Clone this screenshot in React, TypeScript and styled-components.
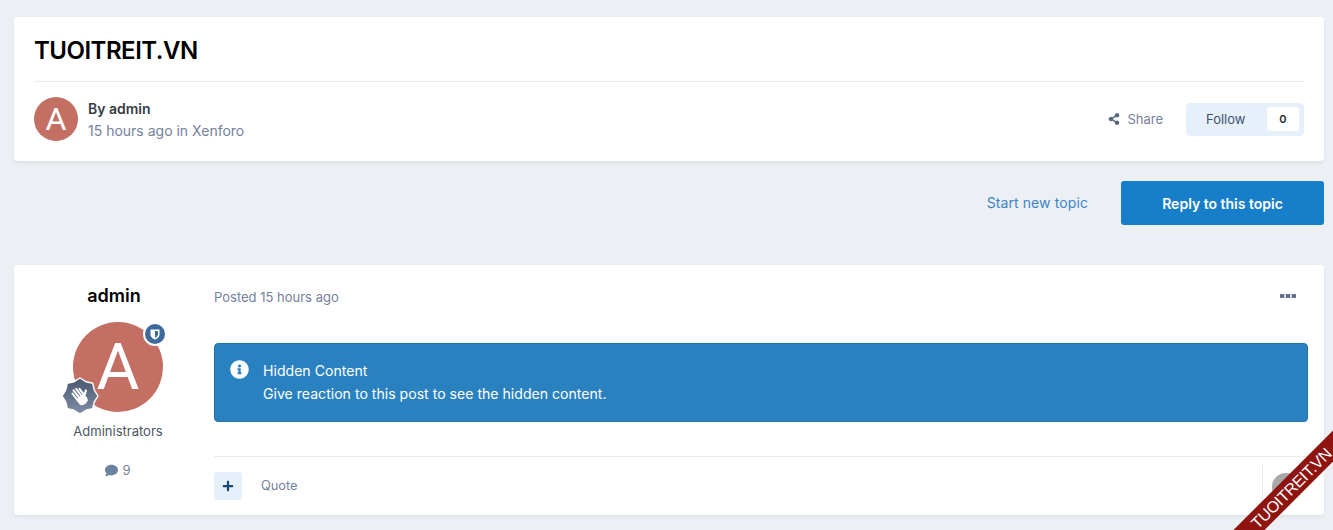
import { createGlobalStyle } from "styled-components";
import styled from "styled-components";
import { FaInfoCircle, FaComment, FaShareAlt, FaPlus } from "react-icons/fa";

const GlobalStyle = createGlobalStyle`
  html, body {
    margin: 0;
    height: 530px;
    overflow: hidden;
    background: #ecf0f5;
    font-family: Inter, "Liberation Sans", sans-serif;
  }
`;

const Page = styled.div`
  position: relative;
  width: 1333px;
  height: 530px;
  overflow: hidden;
  box-sizing: border-box;
  padding: 17px 9px 0 14px;
`;

const Card = styled.section`
  background: #fff;
  border-radius: 4px;
  box-shadow: 0 2px 4px -1px rgba(0, 0, 0, 0.1);
`;

const Header = styled(Card)`
  height: 144px;
  box-sizing: border-box;
  padding: 0 20px;
`;

const Title = styled.h1`
  margin: 0;
  height: 64px;
  line-height: 68px;
  font-size: 24px;
  font-weight: 600;
  letter-spacing: -0.5px;
  color: #000;
  border-bottom: 1px solid #e9ebee;
`;

const MetaRow = styled.div`
  display: flex;
  align-items: center;
  height: 74px;
`;

const Avatar = styled.div<{ $size: number }>`
  position: relative;
  flex: none;
  width: ${(p) => p.$size}px;
  height: ${(p) => p.$size}px;
  border-radius: 50%;
  background: #c46f63;
  color: #fff;
  display: flex;
  align-items: center;
  justify-content: center;
  font-family: Roboto, sans-serif;
  font-size: ${(p) => p.$size * 0.73}px;
  line-height: 1;
`;

const MetaText = styled.div`
  margin-left: 10px;
  padding-top: 2px;
  font-size: 14px;
  line-height: 22px;
  color: #76819c;
`;

const MetaAuthor = styled.div`
  font-weight: 600;
  font-size: 14px;
  color: #353c41;
`;

const MetaActions = styled.div`
  margin-left: auto;
  display: flex;
  align-items: center;
`;

const ShareLink = styled.a`
  display: flex;
  align-items: center;
  gap: 7px;
  margin-right: 23px;
  font-size: 13px;
  color: #76819c;
  svg {
    width: 12px;
    height: 12px;
    color: #5b6780;
  }
`;

const FollowButton = styled.div`
  width: 118px;
  height: 33px;
  box-sizing: border-box;
  padding: 4px 5px 4px 20px;
  display: flex;
  align-items: center;
  justify-content: space-between;
  background: #e6f0fa;
  border-radius: 4px;
  font-size: 13px;
  color: #3d5170;
`;

const FollowCount = styled.span`
  width: 32px;
  height: 24px;
  display: flex;
  align-items: center;
  justify-content: center;
  background: #fff;
  border-radius: 3px;
  font-size: 11px;
  font-weight: 600;
  color: #262e3a;
`;

const TopicActions = styled.div`
  display: flex;
  justify-content: flex-end;
  height: 44px;
  margin: 20px 0 40px;
`;

const StartLink = styled.a`
  margin-right: 33px;
  font-size: 14px;
  letter-spacing: 0.1px;
  line-height: 43px;
  color: #3d85c6;
`;

const ReplyButton = styled.a`
  width: 203px;
  height: 44px;
  display: flex;
  align-items: center;
  justify-content: center;
  background: #177ec9;
  border-radius: 3px;
  color: #fff;
  font-size: 14px;
  font-weight: 600;
`;

const Post = styled(Card)`
  height: 250px;
  display: flex;
`;

const Author = styled.aside`
  flex: none;
  width: 200px;
  box-sizing: border-box;
  padding: 20px 0 0 8px;
  display: flex;
  flex-direction: column;
  align-items: center;
`;

const AuthorName = styled.div`
  margin: 0 0 15px -8px;
  font-size: 18px;
  font-weight: 600;
  line-height: 22px;
  color: #000;
`;

const ModBadge = styled.span`
  position: absolute;
  top: 0;
  right: -4px;
  width: 24px;
  height: 24px;
  box-sizing: border-box;
  border: 2px solid #fff;
  border-radius: 50%;
  background: #3c6a9c;
  display: flex;
  align-items: center;
  justify-content: center;
  svg {
    width: 10px;
    height: 11px;
  }
`;

const RankBadge = styled.svg`
  position: absolute;
  left: -12px;
  bottom: -3px;
  width: 38px;
  height: 38px;
`;

const Group = styled.div`
  margin-top: 10px;
  font-size: 13px;
  line-height: 18px;
  color: #4b5563;
`;

const PostCount = styled.div`
  margin-top: 21px;
  display: flex;
  align-items: center;
  gap: 4px;
  font-size: 13px;
  line-height: 18px;
  color: #76819c;
  svg {
    width: 13px;
    height: 13px;
    color: #6b83a0;
  }
`;

const Body = styled.div`
  flex: 1;
  min-width: 0;
  padding-right: 16px;
  display: flex;
  flex-direction: column;
`;

const PostHead = styled.div`
  height: 78px;
  flex: none;
  padding: 24px 12px 0 0;
  box-sizing: border-box;
  display: flex;
  justify-content: space-between;
  font-size: 13px;
  line-height: 17px;
  color: #76819c;
`;

const MoreDots = styled.svg`
  width: 16px;
  height: 4px;
  margin-top: 5px;
  fill: #5f7088;
`;

const Notice = styled.div`
  height: 79px;
  box-sizing: border-box;
  padding: 16px 15px;
  display: flex;
  background: #2a81c0;
  border: 1px solid #2473ad;
  border-radius: 4px;
  color: #fff;
  font-size: 14.1px;
  line-height: 22.5px;
`;

const NoticeIcon = styled.span`
  width: 33px;
  svg {
    display: block;
    width: 19px;
    height: 19px;
  }
`;

const PostFooter = styled.div`
  margin-top: 34px;
  height: 59px;
  border-top: 1px solid #e9ebee;
  display: flex;
  align-items: flex-start;
`;

const PlusButton = styled.span`
  margin-top: 15px;
  width: 28px;
  height: 28px;
  display: flex;
  align-items: center;
  justify-content: center;
  background: #e6f0fa;
  border-radius: 3px;
  color: #1c4a78;
  svg {
    width: 12px;
    height: 12px;
  }
`;

const QuoteLink = styled.a`
  margin: 20px 0 0 19px;
  font-size: 12.8px;
  line-height: 18px;
  color: #76819c;
`;

const Reactions = styled.div`
  margin-left: auto;
  margin-top: 8px;
  width: 46px;
  height: 51px;
  border-left: 1px solid #e9ebee;
  box-sizing: border-box;
  padding: 8px 0 0 9px;
`;

const ReactionDot = styled.span`
  display: block;
  width: 28px;
  height: 28px;
  border-radius: 50%;
  background: #a9a9a9;
`;

const Ribbon = styled.div`
  position: absolute;
  left: 1214.5px;
  top: 476.5px;
  width: 152px;
  height: 22px;
  background: #8f1410;
  color: #fff;
  font-family: "Liberation Sans", sans-serif;
  font-size: 16px;
  letter-spacing: -0.3px;
  line-height: 23px;
  text-align: center;
  transform: rotate(-45deg);
`;

export default function App() {
  return (
    <>
      <GlobalStyle />
      <Page>
        <Header>
          <Title>TUOITREIT.VN</Title>
          <MetaRow>
            <Avatar $size={44}>A</Avatar>
            <MetaText>
              <MetaAuthor>By admin</MetaAuthor>
              15 hours ago in Xenforo
            </MetaText>
            <MetaActions>
              <ShareLink>
                <FaShareAlt />
                Share
              </ShareLink>
              <FollowButton>
                Follow
                <FollowCount>0</FollowCount>
              </FollowButton>
            </MetaActions>
          </MetaRow>
        </Header>

        <TopicActions>
          <StartLink>Start new topic</StartLink>
          <ReplyButton>Reply to this topic</ReplyButton>
        </TopicActions>

        <Post>
          <Author>
            <AuthorName>admin</AuthorName>
            <Avatar $size={90}>
              A
              <ModBadge>
                <svg viewBox="0 0 10 11">
                  <path d="M0.5 0.5H9.5V5.5C9.5 8 7 10 5 10.5C3 10 0.5 8 0.5 5.5Z" fill="#fff" />
                  <path d="M5 2H8V5.5C8 7 6.2 8.4 5 8.9Z" fill="#3c6a9c" />
                </svg>
              </ModBadge>
              <RankBadge viewBox="0 0 38 38">
                <defs>
                  <linearGradient id="rank" x1="0" y1="0" x2="0" y2="1">
                    <stop offset="0" stopColor="#47566e" />
                    <stop offset="1" stopColor="#808da6" />
                  </linearGradient>
                </defs>
                <path
                  d="M19 1L24.9 4.7L31.7 6.3L33.3 13.1L37 19L33.3 24.9L31.7 31.7L24.9 33.3L19 37L13.1 33.3L6.3 31.7L4.7 24.9L1 19L4.7 13.1L6.3 6.3L13.1 4.7Z"
                  fill="url(#rank)"
                  stroke="#fff"
                  strokeWidth="1.4"
                  strokeLinejoin="round"
                />
                <g transform="rotate(-38 19 19)" fill="#fff">
                  <path d="M13.5 19.5H23.5V24.5C23.5 27 21.5 28.5 18.5 28.5C15.5 28.5 13.5 27 13.5 24.5Z" />
                  <rect x="13.5" y="11.5" width="2" height="9" rx="1" />
                  <rect x="16.4" y="9.5" width="2" height="11" rx="1" />
                  <rect x="19.3" y="10" width="2" height="10.5" rx="1" />
                  <rect x="22" y="12" width="2" height="9" rx="1" />
                  <rect x="23" y="20" width="6" height="2.2" rx="1.1" transform="rotate(-35 23 21)" />
                </g>
              </RankBadge>
            </Avatar>
            <Group>Administrators</Group>
            <PostCount>
              <FaComment />9
            </PostCount>
          </Author>
          <Body>
            <PostHead>
              <span>Posted 15 hours ago</span>
              <MoreDots viewBox="0 0 16 4">
                <rect x="0" width="4.4" height="4" />
                <rect x="5.8" width="4.4" height="4" />
                <rect x="11.6" width="4.4" height="4" />
              </MoreDots>
            </PostHead>
            <Notice>
              <NoticeIcon>
                <FaInfoCircle />
              </NoticeIcon>
              <div>
                Hidden Content
                <br />
                Give reaction to this post to see the hidden content.
              </div>
            </Notice>
            <PostFooter>
              <PlusButton>
                <FaPlus />
              </PlusButton>
              <QuoteLink>Quote</QuoteLink>
              <Reactions>
                <ReactionDot />
              </Reactions>
            </PostFooter>
          </Body>
        </Post>
        <Ribbon>TUOITREIT.VN</Ribbon>
      </Page>
    </>
  );
}
